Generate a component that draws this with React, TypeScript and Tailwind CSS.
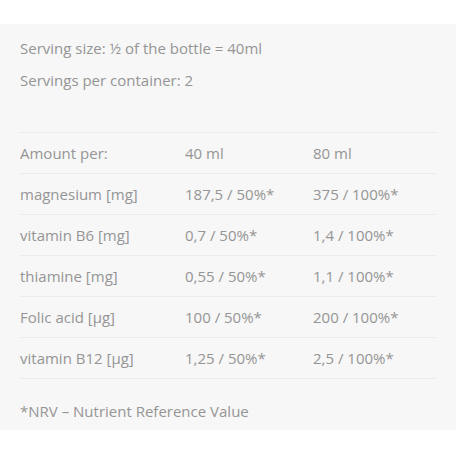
import React from 'react';

const rows = [
  { name: 'Amount per:', a: '40 ml', b: '80 ml' },
  { name: 'magnesium [mg]', a: '187,5 / 50%*', b: '375 / 100%*' },
  { name: 'vitamin B6 [mg]', a: '0,7 / 50%*', b: '1,4 / 100%*' },
  { name: 'thiamine [mg]', a: '0,55 / 50%*', b: '1,1 / 100%*' },
  { name: 'Folic acid [µg]', a: '100 / 50%*', b: '200 / 100%*' },
  { name: 'vitamin B12 [µg]', a: '1,25 / 50%*', b: '2,5 / 100%*' },
];

const App: React.FC = () => {
  return (
    <div className="w-[456px] h-[456px] bg-white pt-[24px] font-['Open_Sans',sans-serif] text-[15px] text-[#959595]">
      <div className="bg-[#f7f7f7] px-[20px] pt-[8px] pb-[7px]">
        <p className="leading-[32px]">Serving size: ½ of the bottle = 40ml</p>
        <p className="leading-[32px]">Servings per container: 2</p>

        {/* table */}
        <div className="mt-[36px] border-t border-[#ececec]">
          {rows.map((r) => (
            <div key={r.name} className="flex h-[41px] items-center border-b border-[#ececec]">
              <span className="w-[165px]">{r.name}</span>
              <span className="w-[128px]">{r.a}</span>
              <span>{r.b}</span>
            </div>
          ))}
        </div>

        <p className="mt-[20px] leading-[24px]">*NRV – Nutrient Reference Value</p>
      </div>
    </div>
  );
};

export default App;
